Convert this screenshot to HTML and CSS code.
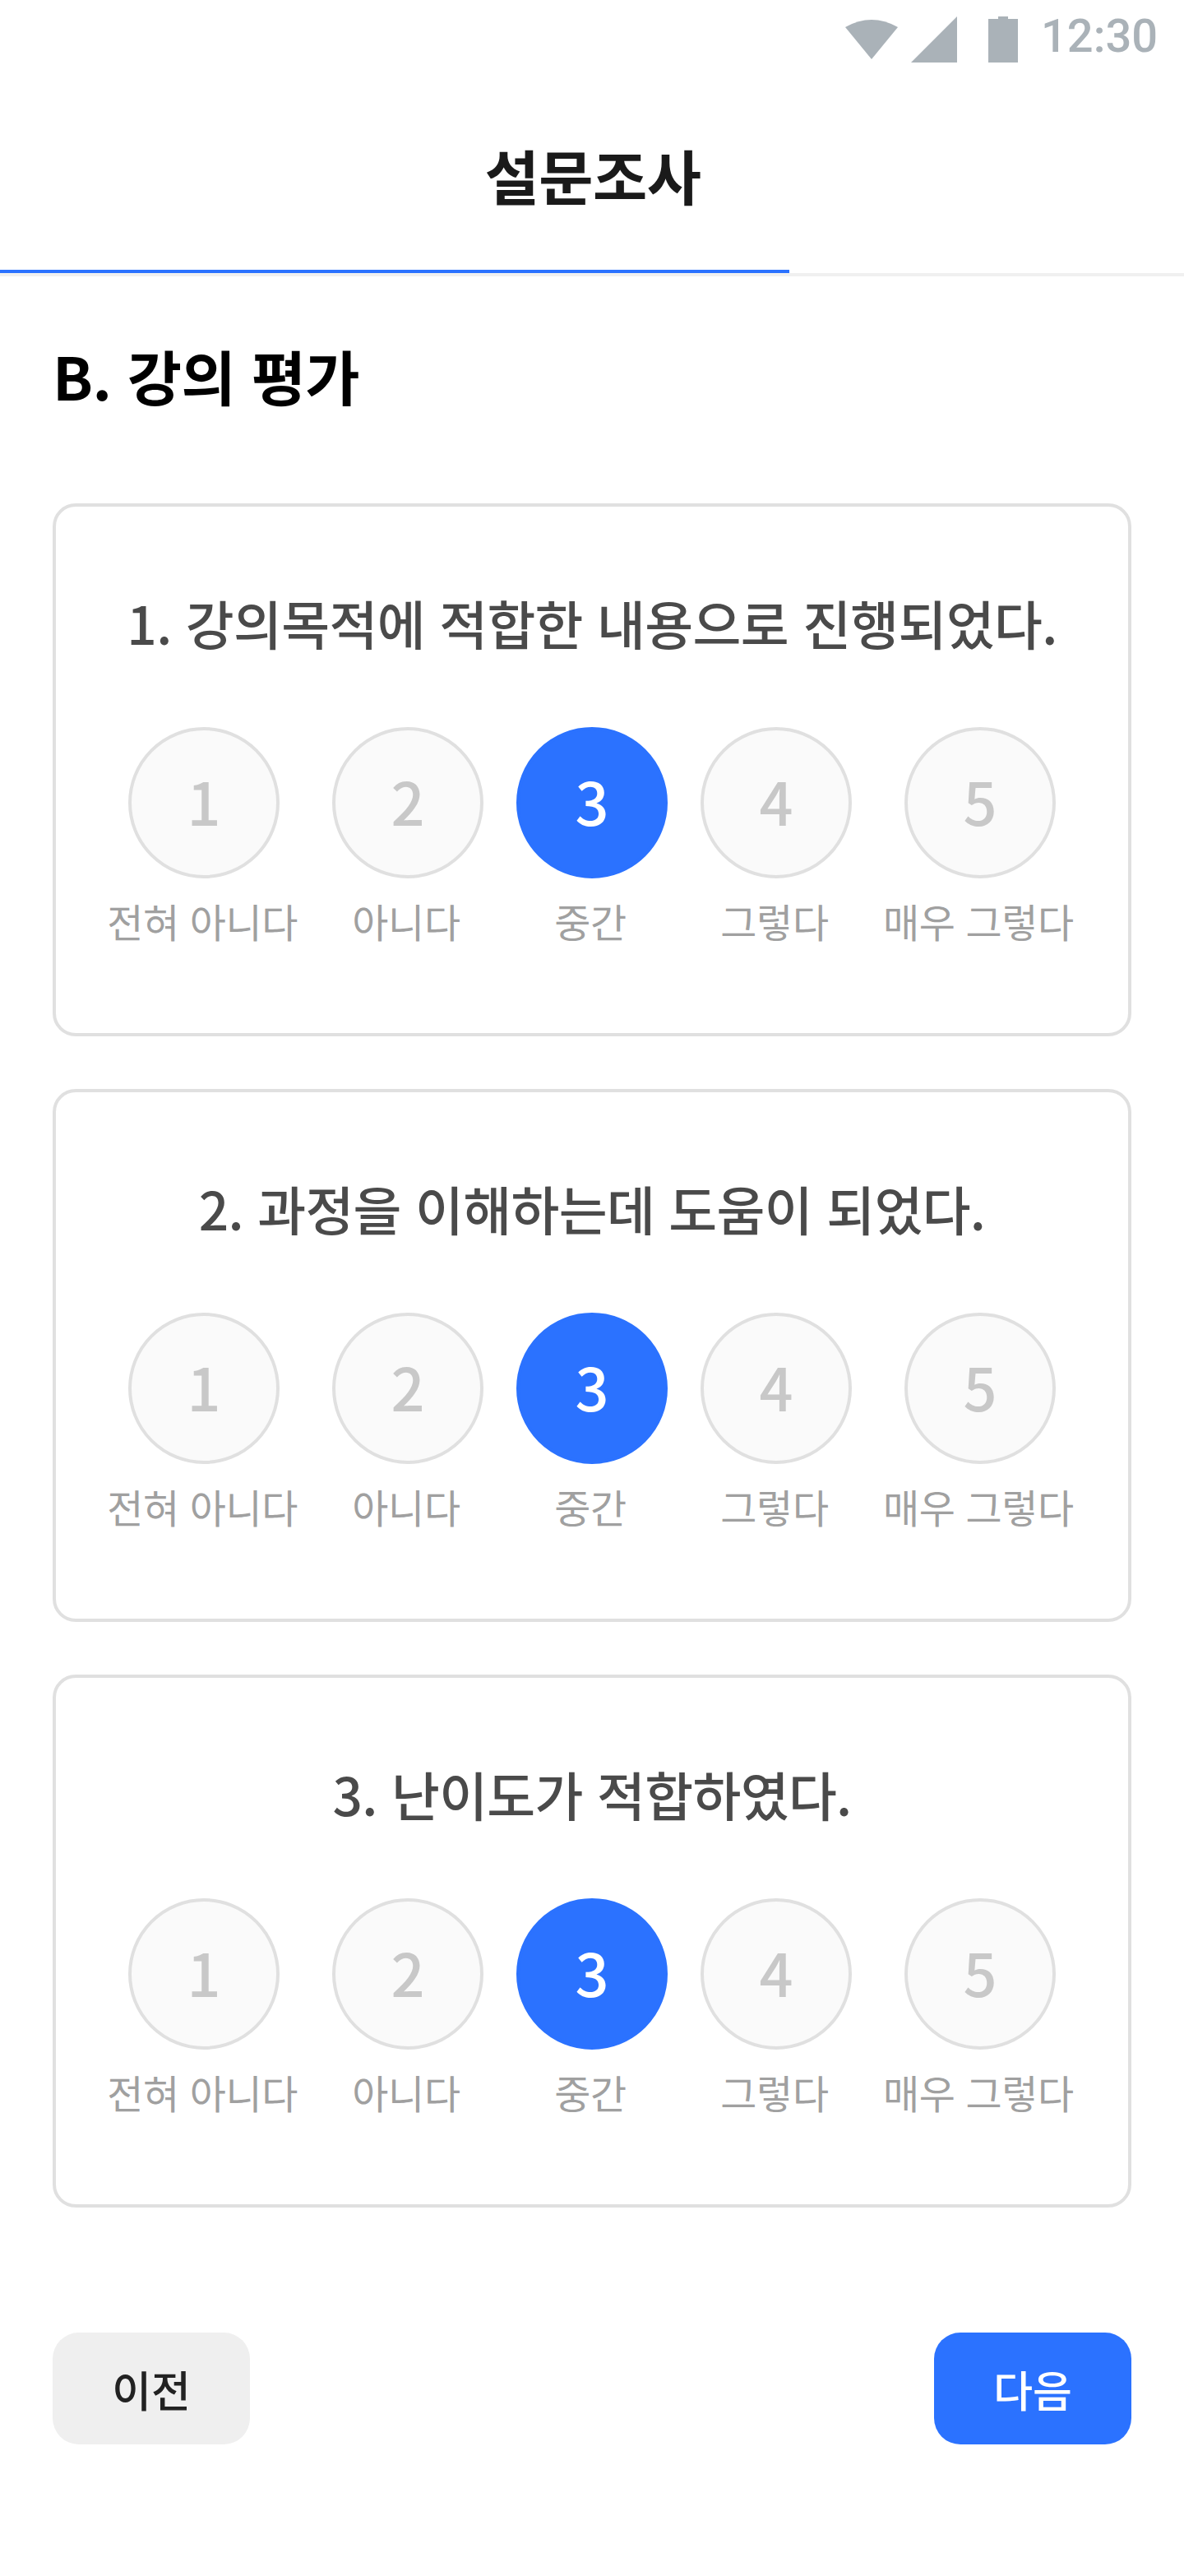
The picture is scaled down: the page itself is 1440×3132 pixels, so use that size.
FILE: index.html
```html
<!DOCTYPE html>
<html lang="ko">
<head>
<meta charset="utf-8">
<title>설문조사</title>
<link rel="stylesheet" href="styles.css">
</head>
<body>
<div class="status">
	<svg class="ico-wifi" viewBox="0 0 64 48"><path d="M0 9Q32 -9 64 9L32 48Z"/></svg>
	<svg class="ico-signal" viewBox="0 0 56 56"><path d="M56 0V56H0Z"/></svg>
	<svg class="ico-battery" viewBox="0 0 36 56"><path d="M12 0H24V3H36V56H0V3H12Z"/></svg>
	<span class="time">12:30</span>
</div>
<div class="header"><h1>설문조사</h1></div>
<div class="progress"><div class="progress-fill"></div></div>

<h2 class="section">B. 강의 평가</h2>

<div class="card">
	<p class="question">1. 강의목적에 적합한 내용으로 진행되었다.</p>
	<div class="options">
		<div class="option"><span class="circle">1</span><span class="label">전혀 아니다</span></div>
		<div class="option"><span class="circle">2</span><span class="label">아니다</span></div>
		<div class="option on"><span class="circle">3</span><span class="label">중간</span></div>
		<div class="option"><span class="circle">4</span><span class="label">그렇다</span></div>
		<div class="option"><span class="circle">5</span><span class="label">매우 그렇다</span></div>
	</div>
</div>
<div class="card">
	<p class="question">2. 과정을 이해하는데 도움이 되었다.</p>
	<div class="options">
		<div class="option"><span class="circle">1</span><span class="label">전혀 아니다</span></div>
		<div class="option"><span class="circle">2</span><span class="label">아니다</span></div>
		<div class="option on"><span class="circle">3</span><span class="label">중간</span></div>
		<div class="option"><span class="circle">4</span><span class="label">그렇다</span></div>
		<div class="option"><span class="circle">5</span><span class="label">매우 그렇다</span></div>
	</div>
</div>
<div class="card">
	<p class="question">3. 난이도가 적합하였다.</p>
	<div class="options">
		<div class="option"><span class="circle">1</span><span class="label">전혀 아니다</span></div>
		<div class="option"><span class="circle">2</span><span class="label">아니다</span></div>
		<div class="option on"><span class="circle">3</span><span class="label">중간</span></div>
		<div class="option"><span class="circle">4</span><span class="label">그렇다</span></div>
		<div class="option"><span class="circle">5</span><span class="label">매우 그렇다</span></div>
	</div>
</div>

<div class="buttons">
	<button class="btn btn-prev">이전</button>
	<button class="btn btn-next">다음</button>
</div>
</body>
</html>
```

FILE: styles.css
```css
*{ margin:0; padding:0; box-sizing:border-box; }
body{ width:1440px; height:3132px; overflow:hidden; background:#fff; font-family:"Noto Sans CJK KR","Noto Sans",sans-serif; }
.status{ height:96px; display:flex; align-items:flex-start; padding-top:20px; fill:#aab2b8; }
.status svg{ display:block; flex:none; }
.ico-wifi{ width:64px; height:48px; margin:4px 0 0 1028px; }
.ico-signal{ width:56px; height:56px; margin-left:16px; }
.ico-battery{ width:36px; height:56px; margin-left:38px; }
.time{ margin-left:28px; font-family:Roboto,sans-serif; font-size:56px; font-weight:500; line-height:48px; color:#aab2b8; }
.header{ height:232px; display:flex; align-items:center; justify-content:center; padding-left:2px; }
.header h1{ font-size:72px; font-weight:700; color:#1a1a1a; letter-spacing:-0.5px; line-height:100px; }
.progress{ height:8px; background:linear-gradient(#fff 50%,#f0f0f0 50%); }
.progress-fill{ width:960px; height:4px; background:#2b72ff; }
.section{ margin:68px 0 0 64px; font-size:72px; font-weight:700; color:#000; line-height:104px; letter-spacing:-0.6px; }
.card{ width:1312px; height:648px; margin:0 0 64px 64px; border:4px solid #e0e0e0; border-radius:28px; padding-top:96px; }
.section + .card{ margin-top:104px; }
.question{ text-align:center; font-size:64px; font-weight:500; color:#4a4a4a; line-height:88px; letter-spacing:-0.67px; }
.options{ display:flex; justify-content:center; gap:40px; margin-top:84px; }
.option{ display:flex; flex-direction:column; align-items:center; }
.circle{ display:flex; align-items:center; justify-content:center; width:184px; height:184px; padding-bottom:8px; border:4px solid #e0e0e0; border-radius:50%; background:#fafafa; font-size:72px; font-weight:500; color:#c8c8c8; }
.label{ margin:16px 2px 0 -2px; font-size:48px; line-height:70px; color:#a0a0a0; white-space:nowrap; font-weight:400; letter-spacing:-0.4px; }
.option.on .circle{ background:#2b72ff; border-color:#2b72ff; color:#fff; }
.buttons{ display:flex; justify-content:space-between; margin:152px 64px 0; }
.btn{ width:240px; height:136px; border:0; border-radius:32px; font-family:inherit; font-size:52px; font-weight:500; }
.btn-prev{ background:#efefef; color:#222; }
.btn-next{ background:#2b72ff; color:#fff; }
```
